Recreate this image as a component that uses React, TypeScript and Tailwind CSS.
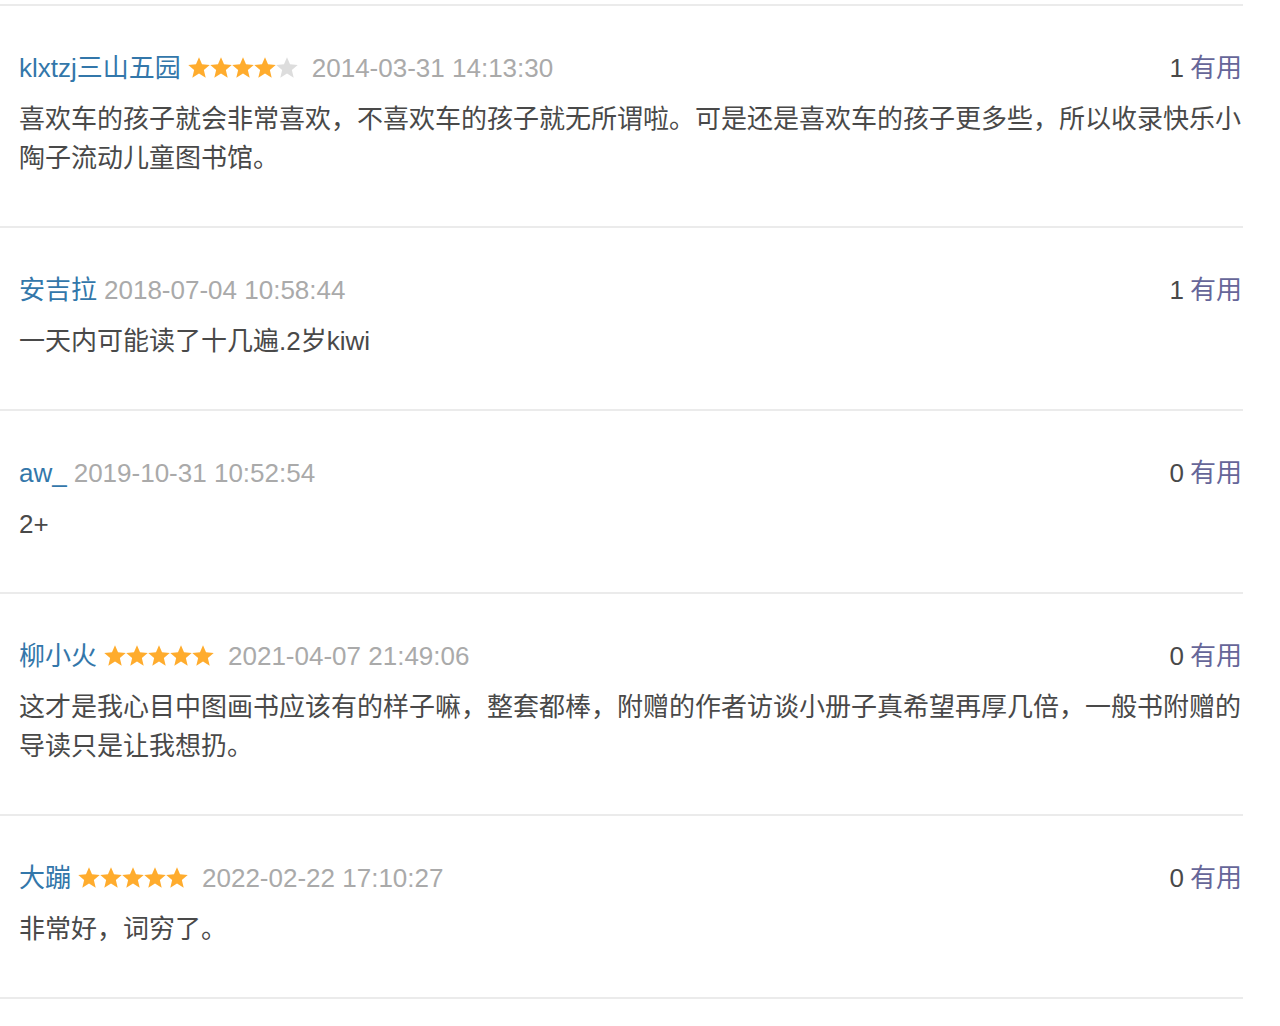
import React from "react";

type Review = {
  name: string;
  stars: number | null;
  date: string;
  useful: number;
  content: string;
};

const reviews: Review[] = [
  {
    name: "klxtzj三山五园",
    stars: 4,
    date: "2014-03-31 14:13:30",
    useful: 1,
    content:
      "喜欢车的孩子就会非常喜欢，不喜欢车的孩子就无所谓啦。可是还是喜欢车的孩子更多些，所以收录快乐小陶子流动儿童图书馆。",
  },
  {
    name: "安吉拉",
    stars: null,
    date: "2018-07-04 10:58:44",
    useful: 1,
    content: "一天内可能读了十几遍.2岁kiwi",
  },
  {
    name: "aw_",
    stars: null,
    date: "2019-10-31 10:52:54",
    useful: 0,
    content: "2+",
  },
  {
    name: "柳小火",
    stars: 5,
    date: "2021-04-07 21:49:06",
    useful: 0,
    content:
      "这才是我心目中图画书应该有的样子嘛，整套都棒，附赠的作者访谈小册子真希望再厚几倍，一般书附赠的导读只是让我想扔。",
  },
  {
    name: "大蹦",
    stars: 5,
    date: "2022-02-22 17:10:27",
    useful: 0,
    content: "非常好，词穷了。",
  },
];

function Star({ filled }: { filled: boolean }) {
  return (
    <svg viewBox="0 0 24 24" className="w-[22px] h-[22px] block overflow-visible" aria-hidden="true">
      <polygon
        points="12,0.3 15.3,8 23.7,8.6 17.3,14.1 19.3,22.5 12,18 4.7,22.5 6.7,14.1 0.3,8.6 8.7,8"
        fill={filled ? "#ffac2d" : "#dddddd"}
      />
    </svg>
  );
}

function Stars({ count }: { count: number }) {
  return (
    <span className="ml-[7px] mr-[7px] flex items-center">
      {[0, 1, 2, 3, 4].map((i) => (
        <Star key={i} filled={i < count} />
      ))}
    </span>
  );
}

export default function App() {
  return (
    <div
      className="bg-white min-h-[1026px] pt-[4px]"
      style={{ fontFamily: '"Liberation Sans", "Noto Sans CJK SC", sans-serif' }}
    >
      <div className="w-[1243px]">
        {reviews.map((r, idx) => (
          <div key={idx} className="border-t-2 border-[#ebebeb] pt-[43px] pb-[48px] pl-[19px]">
            <div className="flex items-center justify-between h-[38px] text-[26px] leading-[38px]">
              <div className="flex items-center">
                <span className="text-[#3377aa]">{r.name}</span>
                {r.stars !== null ? <Stars count={r.stars} /> : null}
                <span className="ml-[7px] text-[#aaaaaa]">{r.date}</span>
              </div>
              <div className="flex items-center pr-[1px]">
                <span className="text-[#494949]">{r.useful}</span>
                <span className="ml-[6px] text-[#666699]">有用</span>
              </div>
            </div>
            <div className="mt-[13px] text-[26px] leading-[39px] text-[#494949]">
              {r.content}
            </div>
          </div>
        ))}
        <div className="border-t-2 border-[#ebebeb]" />
      </div>
    </div>
  );
}
